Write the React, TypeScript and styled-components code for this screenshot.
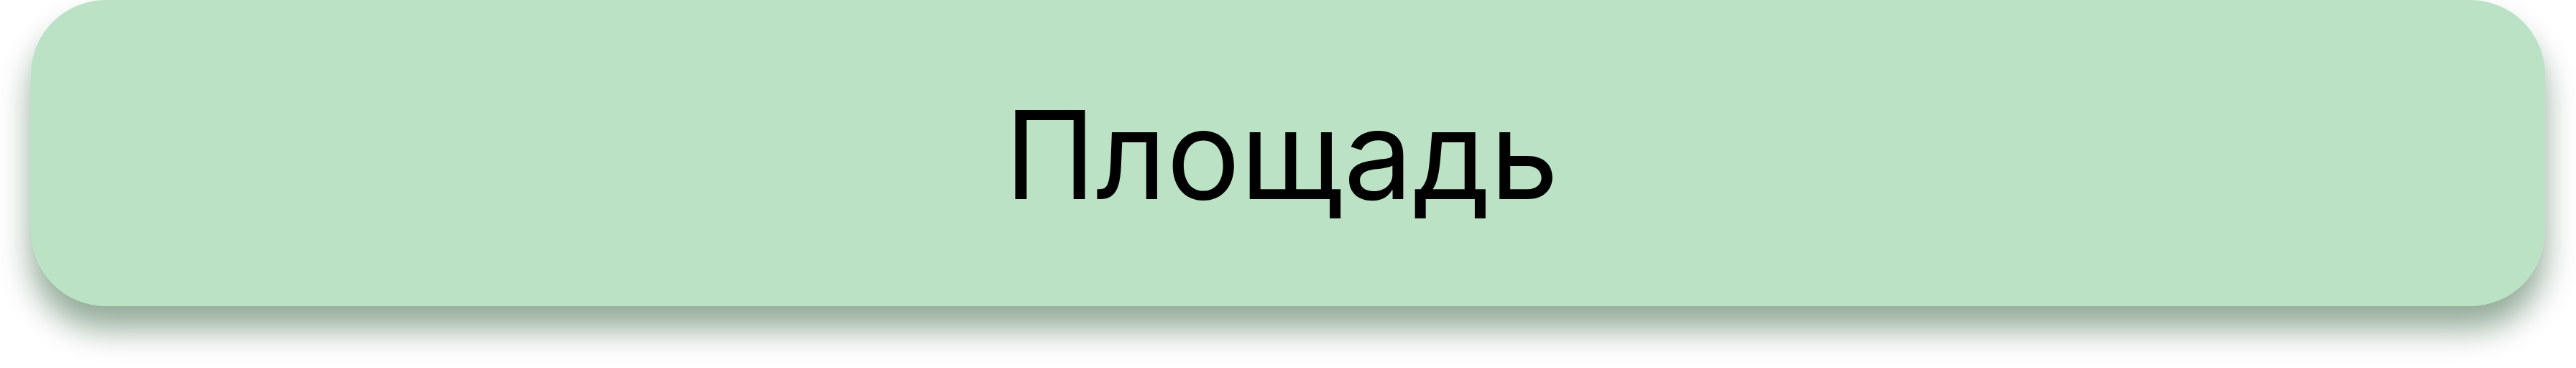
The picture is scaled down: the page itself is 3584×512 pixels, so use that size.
import React from "react";
import styled, { createGlobalStyle } from "styled-components";

const Global = createGlobalStyle`
  html, body {
    margin: 0;
    padding: 0;
    background: #ffffff;
  }
  body {
    font-family: Inter, "Noto Sans", sans-serif;
  }
`;

const Page = styled.div`
  display: flex;
  justify-content: center;
  padding: 0 43px;
  height: 512px;
  box-sizing: border-box;
`;

const AreaButton = styled.button`
  width: 100%;
  height: 426px;
  border: none;
  border-radius: 104px;
  background: #bbe2c4;
  box-shadow: 0 32px 44px rgba(20, 70, 30, 0.46);
  display: flex;
  align-items: center;
  justify-content: center;
  font-family: Inter, "Noto Sans", sans-serif;
  font-size: 171px;
  font-weight: 400;
  color: #000000;
  cursor: pointer;
  padding: 0;
`;

const Label = styled.span`
  line-height: 1;
  transform: translate(-9px, 1px);
`;

export default function App() {
  return (
    <>
      <Global />
      <Page>
        <AreaButton>
          <Label>Площадь</Label>
        </AreaButton>
      </Page>
    </>
  );
}
